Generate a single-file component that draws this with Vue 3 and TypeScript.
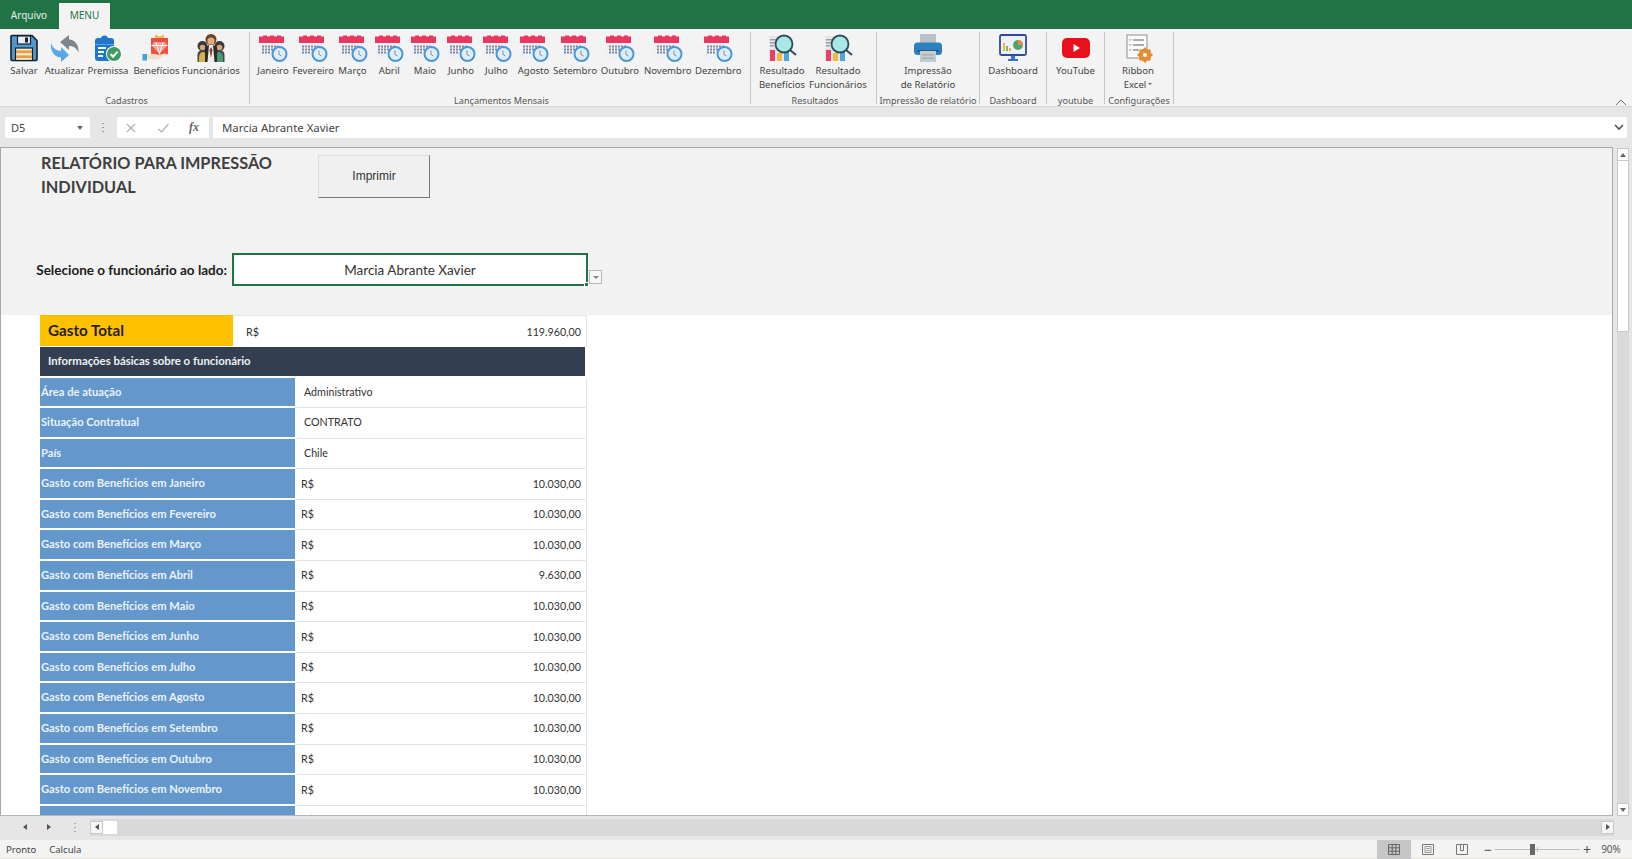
<script setup lang="ts">
interface Btn { label: string[]; icon: string; w: number; caret?: boolean }
interface Group { name: string; width: number; pad: number; buttons: Btn[] }

const months: [string, number][] = [
  ['Janeiro', 40], ['Fevereiro', 40.5], ['Março', 38], ['Abril', 35.5], ['Maio', 36], ['Junho', 36],
  ['Julho', 35], ['Agosto', 39], ['Setembro', 44], ['Outubro', 46], ['Novembro', 49.5], ['Dezembro', 51.5],
]

const groups: Group[] = [
  { name: 'Cadastros', width: 250, pad: 4, buttons: [
    { label: ['Salvar'], icon: 'save', w: 40 },
    { label: ['Atualizar'], icon: 'refresh', w: 41 },
    { label: ['Premissa'], icon: 'clip', w: 46 },
    { label: ['Benefícios'], icon: 'gift', w: 51 },
    { label: ['Funcionários'], icon: 'people', w: 58 },
  ] },
  { name: 'Lançamentos Mensais', width: 501, pad: 3, buttons: months.map(([m, w]) => ({ label: [m], icon: 'cal', w })) },
  { name: 'Resultados', width: 126, pad: 3, buttons: [
    { label: ['Resultado', 'Benefícios'], icon: 'result', w: 56 },
    { label: ['Resultado', 'Funcionários'], icon: 'result', w: 56 },
  ] },
  { name: 'Impressão de relatório', width: 103, pad: 0, buttons: [
    { label: ['Impressão', 'de Relatório'], icon: 'print', w: 102 },
  ] },
  { name: 'Dashboard', width: 67, pad: 0, buttons: [{ label: ['Dashboard'], icon: 'dash', w: 66 }] },
  { name: 'youtube', width: 58, pad: 0, buttons: [{ label: ['YouTube'], icon: 'yt', w: 57 }] },
  { name: 'Configurações', width: 69, pad: 0, buttons: [{ label: ['Ribbon', 'Excel'], icon: 'ribbon', w: 66, caret: true }] },
]

const info: [string, string][] = [
  ['Área de atuação', 'Administrativo'],
  ['Situação Contratual', 'CONTRATO'],
  ['País', 'Chile'],
]

const spend: [string, string][] = [
  ['Janeiro', '10.030,00'], ['Fevereiro', '10.030,00'], ['Março', '10.030,00'], ['Abril', '9.630,00'],
  ['Maio', '10.030,00'], ['Junho', '10.030,00'], ['Julho', '10.030,00'], ['Agosto', '10.030,00'],
  ['Setembro', '10.030,00'], ['Outubro', '10.030,00'], ['Novembro', '10.030,00'], ['Dezembro', '10.030,00'],
]
</script>

<template>
  <div class="app">
    <svg class="sprite" aria-hidden="true">
      <symbol id="save" viewBox="0 0 30 30">
        <path d="M3 2.500h20l5 5v19a1 1 0 0 1-1 1H3a1 1 0 0 1-1-1v-23a1 1 0 0 1 1-1z" fill="#4f97cf" stroke="#15202b" stroke-width="1.600"/>
        <rect x="8.500" y="3" width="13" height="8" fill="#e8eef3" stroke="#15202b" stroke-width="1.200"/>
        <rect x="16" y="4.500" width="3" height="5" fill="#15202b"/>
        <rect x="6.500" y="15" width="17" height="12.500" fill="#f6e6c8" stroke="#15202b" stroke-width="1.200"/>
        <rect x="7" y="17.500" width="16" height="2.600" fill="#e89d3e"/>
        <rect x="7" y="22.400" width="16" height="2.600" fill="#e89d3e"/>
      </symbol>
      <symbol id="refresh" viewBox="0 0 30 30">
        <path d="M10 9l9-7v4.500c6 .5 10 5 9.500 13-2-4.500-5-6.500-9.500-6.500v4z" fill="#7c878c"/>
        <path d="M1 10c1.500 5 5 7.500 10 8v-4l8 8-8 7v-4.500C4 24 0 18 1 10z" fill="#5aa9e6"/>
      </symbol>
      <symbol id="clip" viewBox="0 0 30 30">
        <rect x="2" y="5" width="19" height="23" rx="3" fill="#1e78c8"/>
        <path d="M8 6a3.500 3.500 0 0 1 7 0h2v4H6V6z" fill="#1e78c8"/>
        <rect x="2" y="11" width="19" height="1" fill="#5fa4de"/>
        <rect x="5" y="14" width="8" height="2" fill="#fff"/>
        <rect x="5" y="18" width="6" height="2" fill="#fff"/>
        <rect x="5" y="22" width="5" height="2" fill="#fff"/>
        <circle cx="21" cy="21" r="8" fill="#fff"/>
        <circle cx="21" cy="21" r="7" fill="#3e9b5e"/>
        <path d="M17.500 21l2.600 2.700 4.500-5" fill="none" stroke="#fff" stroke-width="2"/>
      </symbol>
      <symbol id="gift" viewBox="0 0 30 30">
        <path d="M9 5h17v16l-17 3z" fill="#e9503f"/>
        <path d="M13 1.500l4.500 2 4.500-2v3.500H13z" fill="#f3b65c"/>
        <path d="M12 9h11l2.500 3.500-8 8.500-8-8.500z" fill="#f6a093"/>
        <path d="M9.500 12.500h16M14 9.500l3.500 11 3.500-11" fill="none" stroke="#fff" stroke-width="1"/>
        <path d="M5 22c4-2 7-1.500 10-.5 3 .5 7-1 9-1.500-2 4-7 6.500-12 6.500-3 0-5-1-7-1z" fill="#f9dcc6"/>
        <rect x="0.500" y="21" width="4.500" height="6.500" fill="#39a7d9"/>
      </symbol>
      <symbol id="people" viewBox="0 0 30 30">
        <circle cx="6.500" cy="13" r="5" fill="#3b3a38"/>
        <circle cx="23.500" cy="13" r="5" fill="#3b3a38"/>
        <circle cx="6.500" cy="14.500" r="2.800" fill="#d7a681"/>
        <circle cx="23.500" cy="14.500" r="2.800" fill="#d7a681"/>
        <path d="M1.500 29v-7c0-3 2-5 5-5h17c3 0 5 2 5 5v7z" fill="#3f4a44"/>
        <path d="M3 29v-5c0-3 2-5 4-5s3 2 3 5v5z" fill="#d6b24a"/>
        <path d="M20 29v-6c0-2 2-4 3-4 3 0 4 3 4 5v5z" fill="#4a9a7a"/>
        <path d="M9 29V15c0-1 2-3 6-3s6 2 6 3v14z" fill="#2b2b2b"/>
        <path d="M13 12h4l1.500 17h-7z" fill="#f1eee6"/>
        <path d="M15 14l1.500 3L15 25l-1.500-8z" fill="#8b3a2f"/>
        <circle cx="15" cy="6.500" r="5.500" fill="#6a4427"/>
        <circle cx="15" cy="8" r="3.600" fill="#e0ac80"/>
      </symbol>
      <symbol id="cal" viewBox="0 0 30 30">
        <rect x="1" y="4" width="25" height="21" rx="1" fill="#eef1f5"/>
        <path d="M1 3.500h4V2.500h4v1h3V2.500h4v1h3V2.500h4v1h3V10H1z" fill="#e9375f"/>
        <g fill="#7d86a1">
          <rect x="4" y="12.500" width="2" height="2"/><rect x="7" y="12.500" width="2" height="2"/><rect x="10" y="12.500" width="2" height="2"/><rect x="13" y="12.500" width="2" height="2"/><rect x="16" y="12.500" width="2" height="2"/><rect x="19" y="12.500" width="2" height="2"/>
          <rect x="4" y="15.500" width="2" height="2"/><rect x="7" y="15.500" width="2" height="2"/><rect x="10" y="15.500" width="2" height="2"/><rect x="13" y="15.500" width="2" height="2"/>
          <rect x="4" y="18.500" width="2" height="2"/><rect x="7" y="18.500" width="2" height="2"/><rect x="10" y="18.500" width="2" height="2"/>
        </g>
        <circle cx="21.500" cy="21" r="7" fill="#dfeefa" stroke="#4a97da" stroke-width="2"/>
        <path d="M21 17.500V21.500l2.500 1.500" fill="none" stroke="#7d8c9a" stroke-width="1"/>
      </symbol>
      <symbol id="result" viewBox="0 0 30 30">
        <rect x="2" y="3" width="15" height="25" fill="#e6e6ec"/>
        <g fill="#9aa0aa"><rect x="3" y="6" width="6" height="1.500"/><rect x="3" y="9" width="5" height="1.500"/><rect x="3" y="12" width="4" height="1.500"/></g>
        <rect x="3" y="17" width="5" height="11" fill="#e83e6a"/>
        <rect x="10" y="20" width="5" height="8" fill="#f5b942"/>
        <rect x="17" y="18" width="5" height="10" fill="#4aa8e0"/>
        <circle cx="17" cy="11" r="8.500" fill="#a9e8e6" stroke="#2f4b58" stroke-width="1.800"/>
        <path d="M23 17l6 5" stroke="#2f4b58" stroke-width="2"/>
      </symbol>
      <symbol id="print" viewBox="0 0 30 30">
        <path d="M7 2a1 1 0 0 1 1-1h14a1 1 0 0 1 1 1v10H7z" fill="#b7c2c9"/>
        <rect x="1" y="9.500" width="28" height="12.500" rx="3.500" fill="#2f80bf"/>
        <rect x="4" y="17" width="22" height="2" fill="#1f5f8f"/>
        <path d="M7 18h16v11H7z" fill="#c6cbcf"/>
        <rect x="9" y="21" width="12" height="1.500" fill="#aab0b5"/>
        <rect x="9" y="24.500" width="12" height="1.500" fill="#aab0b5"/>
      </symbol>
      <symbol id="dash" viewBox="0 0 30 30">
        <rect x="2" y="2" width="26" height="20" rx="1.500" fill="#eef0fa" stroke="#34499b" stroke-width="1.800"/>
        <rect x="5" y="10" width="2" height="8" fill="#e7b93f"/>
        <rect x="8" y="13" width="2" height="5" fill="#7fb86a"/>
        <rect x="11" y="15" width="2" height="3" fill="#e7b93f"/>
        <circle cx="20" cy="12" r="5" fill="#4fa565"/>
        <path d="M20 7a5 5 0 0 1 5 5h-5z" fill="#ea8a3a"/>
        <path d="M13 23h4v3h3v2H10v-2h3z" fill="#3f6fd0"/>
      </symbol>
      <symbol id="yt" viewBox="0 0 30 30">
        <rect x="1" y="5" width="28" height="20" rx="5" fill="#e8101a"/>
        <path d="M12.500 11v8l6.500-4z" fill="#fff"/>
      </symbol>
      <symbol id="ribbon" viewBox="0 0 30 30">
        <rect x="4" y="2" width="20" height="23" fill="#fafafa" stroke="#8b8f92" stroke-width="1"/>
        <path d="M10 7h11M10 12h11M10 17h6" stroke="#5b6166" stroke-width="1"/>
        <path d="M6 6.500l1 1 1.500-1.500M6 11.500l1 1 1.500-1.500M6 16.500l1 1 1.500-1.500" fill="none" stroke="#6f9a7a" stroke-width="1"/>
        <circle cx="22" cy="22" r="5" fill="none" stroke="#e78a2e" stroke-width="3"/>
        <path d="M22 14.500v15M14.500 22h15M16.700 16.700l10.600 10.600M27.300 16.700L16.700 27.300" stroke="#e78a2e" stroke-width="2"/>
        <circle cx="22" cy="22" r="2" fill="#f8f8f8"/>
      </symbol>
    </svg>

    <header class="titlebar">
      <span class="tab">Arquivo</span>
      <span class="tab active">MENU</span>
    </header>

    <section class="ribbon">
      <div v-for="g in groups" :key="g.name" class="group" :style="{ width: g.width + 'px', paddingLeft: g.pad + 'px' }">
        <div class="buttons">
          <div v-for="b in g.buttons" :key="b.label.join()" class="rbtn" :style="{ width: b.w + 'px' }">
            <svg class="ricon"><use :href="'#' + b.icon" /></svg>
            <span v-for="(l, i) in b.label" :key="l" class="rlabel">{{ l }}<i v-if="b.caret && i === 1" class="caret"></i></span>
          </div>
        </div>
        <div class="gname">{{ g.name }}</div>
      </div>
      <svg class="collapse" width="12" height="7" viewBox="0 0 12 7"><path d="M1 6l5-5 5 5" fill="none" stroke="#777" stroke-width="1"/></svg>
    </section>

    <section class="formula">
      <div class="namebox"><span>D5</span><i class="tri"></i></div>
      <div class="fdots"></div>
      <div class="fxbox">
        <svg width="12" height="12" viewBox="0 0 12 12"><path d="M2 2l8 8M10 2l-8 8" stroke="#b5b5b5" stroke-width="1.300"/></svg>
        <svg width="13" height="12" viewBox="0 0 13 12"><path d="M1.500 7l3 3 7-8" fill="none" stroke="#b5b5b5" stroke-width="1.300"/></svg>
        <span class="fx">fx</span>
      </div>
      <div class="fvalue">
        <span>Marcia Abrante Xavier</span>
        <svg width="10" height="7" viewBox="0 0 10 7"><path d="M1 1l4 4 4-4" fill="none" stroke="#555" stroke-width="1.600"/></svg>
      </div>
    </section>

    <main class="main">
      <div class="sheet">
        <div class="panel">
          <div class="panel-top">
            <h1 class="title">RELATÓRIO PARA IMPRESSÃO<br />INDIVIDUAL</h1>
            <div class="print-btn">Imprimir</div>
          </div>
          <div class="select-row">
            <span class="select-label">Selecione o funcionário ao lado:</span>
            <div class="select-cell">Marcia Abrante Xavier<i class="handle"></i></div>
            <div class="drop"><i class="tri small"></i></div>
          </div>
        </div>

        <div class="table">
          <div class="total">
            <div class="total-label">Gasto Total</div>
            <div class="total-value"><span>R$</span><span>119.960,00</span></div>
          </div>
          <div class="band">Informações básicas sobre o funcionário</div>
          <div class="rows">
            <div v-for="r in info" :key="r[0]" class="row">
              <div class="rowlabel">{{ r[0] }}</div>
              <div class="rowvalue plain">{{ r[1] }}</div>
            </div>
            <div v-for="r in spend" :key="r[0]" class="row">
              <div class="rowlabel">Gasto com Benefícios em {{ r[0] }}</div>
              <div class="rowvalue"><span>R$</span><span>{{ r[1] }}</span></div>
            </div>
          </div>
        </div>
      </div>

      <aside class="vscroll">
        <div class="sbtn"><i class="tri up"></i></div>
        <div class="vthumb"></div>
        <div class="vtrack"></div>
        <div class="sbtn"><i class="tri"></i></div>
      </aside>
    </main>

    <section class="hbar">
      <i class="nav left"></i>
      <i class="nav right"></i>
      <div class="hdots"></div>
      <div class="htrack">
        <div class="hbtn"><i class="nav left dark"></i></div>
        <div class="hthumb"></div>
        <div class="hspace"></div>
        <div class="hbtn end"><i class="nav right dark"></i></div>
      </div>
    </section>

    <footer class="status">
      <span class="st1">Pronto</span>
      <span class="st2">Calcula</span>
      <div class="st-right">
        <div class="view on">
          <svg width="12" height="11" viewBox="0 0 12 11"><path d="M.5.500h11v10H.500zM.5 3.800h11M.5 7.200h11M4.200.5v10M7.800.5v10" fill="none" stroke="#666" stroke-width="1"/></svg>
        </div>
        <div class="view">
          <svg width="12" height="11" viewBox="0 0 12 11"><path d="M.5.500h11v10H.500z" fill="none" stroke="#777"/><path d="M3 2.500h6v6H3zM4.500 4.500h3M4.500 6.500h3" fill="none" stroke="#999"/></svg>
        </div>
        <div class="view">
          <svg width="12" height="11" viewBox="0 0 12 11"><path d="M.5 10.500V.500h11v10zM4.500.5v6h3v-6" fill="none" stroke="#777"/></svg>
        </div>
        <span class="zm minus">−</span>
        <div class="slider"><i class="tick"></i><i class="knob"></i></div>
        <span class="zm plus">+</span>
        <span class="pct">90%</span>
      </div>
    </footer>
  </div>
</template>

<style>
html, body { margin: 0; padding: 0; background: #e6e6e6; overflow: hidden; }
</style>

<style scoped>
.app {
  width: 1632px; height: 859px; display: flex; flex-direction: column; overflow: hidden;
  font-family: "Noto Sans", "Open Sans", sans-serif; color: #444; background: #e6e6e6;
}
.sprite { width: 0; height: 0; position: absolute; }
i { display: block; font-style: normal; }

.titlebar { height: 29px; flex: none; background: #217346; display: flex; align-items: flex-end; padding-left: 3px; box-sizing: border-box; }
.tab { width: 52px; height: 26px; line-height: 25px; text-align: center; font-size: 10px; color: #e4efe8; margin-right: 4px; }
.tab.active { width: 51px; background: #f3f3f3; color: #217346; margin-right: 0; }

.ribbon { height: 78px; flex: none; background: #f3f3f3; border-bottom: 1px solid #d6d6d6; box-sizing: border-box; display: flex; padding-top: 3px; position: relative; }
.group { height: 72px; border-right: 1px solid #c6c6c6; box-sizing: border-box; flex: none; }
.buttons { height: 61px; display: flex; }
.rbtn { display: flex; flex-direction: column; align-items: center; flex: none; }
.ricon { width: 30px; height: 30px; margin-top: 1px; margin-bottom: 1px; flex: none; display: block; }
.rlabel { font-size: 9.600px; line-height: 13.500px; color: #444; white-space: nowrap; display: flex; align-items: center; }
.caret { width: 0; height: 0; margin-left: 2px; border: 2.500px solid transparent; border-top-color: #666; border-bottom: 0; }
.gname { height: 11px; line-height: 15px; font-size: 9.100px; text-align: center; color: #555; white-space: nowrap; }
.collapse { position: absolute; right: 5px; top: 70px; }

.formula { height: 39px; flex: none; display: flex; align-items: flex-start; padding-top: 10px; box-sizing: border-box; padding-left: 5px; background: #e6e6e6; }
.namebox { width: 85px; height: 21px; background: #fff; box-sizing: border-box; display: flex; align-items: center; justify-content: space-between; padding: 0 7px 0 6px; font-size: 11px; color: #444; }
.tri { width: 0; height: 0; border: 3.500px solid transparent; border-top: 4px solid #666; border-bottom: 0; }
.tri.up { border-top: 0; border-bottom: 4px solid #666; }
.tri.small { border-width: 3px; border-bottom: 0; border-top: 3.500px solid #888; }
.fdots { width: 2px; height: 9px; margin: 6px 13px 0 12px; background: repeating-linear-gradient(#999 0 1px, transparent 1px 4px); }
.fxbox { width: 92px; height: 21px; background: #fff; display: flex; align-items: center; justify-content: space-between; padding: 0 10px 0 8px; box-sizing: border-box; margin-right: 4px; }
.fx { font-family: "Liberation Serif", serif; font-style: italic; font-weight: 700; font-size: 12px; color: #666; }
.fvalue { width: 1414px; height: 21px; background: #fff; display: flex; align-items: center; justify-content: space-between; padding: 0 3px 0 9px; box-sizing: border-box; font-size: 11.400px; color: #444; }

.main { flex: 1; min-height: 0; display: flex; }
.sheet { width: 1613px; margin-top: 1px; background: #fff; border: 1px solid #a8a8a8; border-bottom-color: #b5b5b5; box-sizing: border-box; overflow: hidden; flex: none; }
.panel { height: 167px; background: #f2f2f2; position: relative; }
.panel-top { display: flex; padding: 3px 0 0 40px; height: 105px; box-sizing: border-box; }
.title { margin: 0; width: 277px; font-family: Lato, sans-serif; font-size: 16.300px; line-height: 24px; font-weight: 700; color: #3f3f3f; }
.print-btn { width: 112px; height: 43px; margin-top: 4px; background: #f0f0f0; border: 1px solid #dcdcdc; border-right-color: #7a7a7a; border-bottom-color: #7a7a7a; box-sizing: border-box; font-family: "Liberation Sans", sans-serif; font-size: 12px; padding-bottom: 1px; color: #333; display: flex; align-items: center; justify-content: center; }
.select-row { display: flex; align-items: flex-start; }
.select-label { width: 226px; padding-top: 9px; text-align: right; font-family: Lato, sans-serif; font-weight: 700; font-size: 13.500px; line-height: 17px; color: #1c1c1c; white-space: nowrap; }
.select-cell { margin-left: 5px; width: 356px; height: 33px; background: #fff; border: 2px solid #217346; box-sizing: border-box; font-family: Lato, sans-serif; font-size: 13.500px; line-height: 31px; text-align: center; color: #333; position: relative; flex: none; }
.handle { position: absolute; right: -3px; bottom: -3px; width: 5px; height: 5px; background: #217346; border: 1px solid #fff; box-sizing: border-box; }
.drop { width: 13px; height: 14px; margin-top: 17px; margin-left: 1px; background: #f6f6f6; border: 1px solid #b9b9b9; box-sizing: border-box; display: flex; align-items: center; justify-content: center; }

.table { margin-left: 39px; width: 547px; font-family: Lato, sans-serif; }
.total { height: 31px; display: flex; }
.total-label { width: 193px; background: #ffc000; font-weight: 700; font-size: 15.200px; line-height: 30px; padding-left: 8px; box-sizing: border-box; color: #1f1f1f; }
.total-value { flex: 1; display: flex; justify-content: space-between; align-items: center; padding: 0 5px 0 13px; font-size: 10.700px; color: #333; border-right: 1px solid #e6e6e6; border-top: 1px solid #e6e6e6; box-sizing: border-box; }
.band { height: 29px; margin-top: 1px; width: 545px; background: #333f50; color: #eef0f3; font-size: 11.400px; font-weight: 700; line-height: 28px; padding-left: 8px; box-sizing: border-box; }
.rows { margin-top: 1.500px; display: grid; grid-auto-rows: 30.600px; }
.row { display: flex; }
.rowlabel { width: 255px; height: 28.600px; background: #6497cb; color: #eaf2fa; font-size: 11.200px; font-weight: 700; line-height: 28px; padding-left: 1px; box-sizing: border-box; white-space: nowrap; flex: none; }
.rowvalue { flex: 1; display: flex; justify-content: space-between; align-items: center; font-size: 10.700px; color: #333; padding: 0 5px 2px 6px; border-bottom: 1px solid #e4e4e4; border-right: 1px solid #e4e4e4; box-sizing: border-box; }
.rowvalue.plain { padding-left: 9px; justify-content: flex-start; }

.vscroll { width: 12px; margin: 2px 3px 0 4px; display: flex; flex-direction: column; flex: none; }
.sbtn { height: 13px; flex: none; background: #fff; border: 1px solid #c8c8c8; box-sizing: border-box; display: flex; align-items: center; justify-content: center; }
.vthumb { height: 171px; flex: none; background: #fff; border: 1px solid #c8c8c8; border-top: 0; box-sizing: border-box; }
.vtrack { flex: 1; background: #dadada; }

.hbar { height: 24px; flex: none; display: flex; align-items: center; background: #e6e6e6; box-sizing: border-box; padding: 0 0 2px 23px; }
.nav { width: 0; height: 0; border: 3.500px solid transparent; }
.nav.left { border-left: 0; border-right: 4px solid #555; }
.nav.right { border-right: 0; border-left: 4px solid #555; margin-left: 20px; }
.nav.dark { margin-left: 0; }
.hdots { width: 2px; height: 9px; margin: 0 14px 0 23px; background: repeating-linear-gradient(#aaa 0 1px, transparent 1px 4px); }
.htrack { width: 1524px; height: 17px; background: #d9d9d9; display: flex; align-items: center; flex: none; }
.hbtn { width: 13px; height: 13px; background: #f6f6f6; border: 1px solid #c9c9c9; box-sizing: border-box; display: flex; align-items: center; justify-content: center; flex: none; }
.hthumb { width: 14px; height: 13px; background: #fff; flex: none; }
.hspace { flex: 1; }

.status { height: 19px; flex: none; background: #f3f3f3; display: flex; align-items: center; font-size: 9.500px; color: #444; border-bottom: 1px solid #ece6d2; box-sizing: border-box; position: relative; }
.st1 { margin-left: 6px; }
.st2 { margin-left: 13px; }
.st-right { margin-left: auto; height: 100%; display: flex; align-items: center; margin-right: 9px; }
.view { width: 34px; height: 19px; display: flex; align-items: center; justify-content: center; flex: none; }
.view.on { background: #c6c6c6; }
.zm { width: 12px; text-align: center; font-size: 14px; color: #555; line-height: 19px; flex: none; }
.minus { margin-left: 3px; }
.plus { margin-left: 1px; }
.slider { width: 85px; height: 1px; margin-left: 1px; background: #bdbdbd; position: relative; flex: none; }
.knob { position: absolute; left: 35px; top: -5px; width: 5px; height: 11px; background: #666; }
.tick { position: absolute; left: 42px; top: -2px; width: 1px; height: 5px; background: #bbb; }
.pct { width: 24px; margin-left: 6px; text-align: center; color: #555; font-size: 10px; flex: none; }
</style>
